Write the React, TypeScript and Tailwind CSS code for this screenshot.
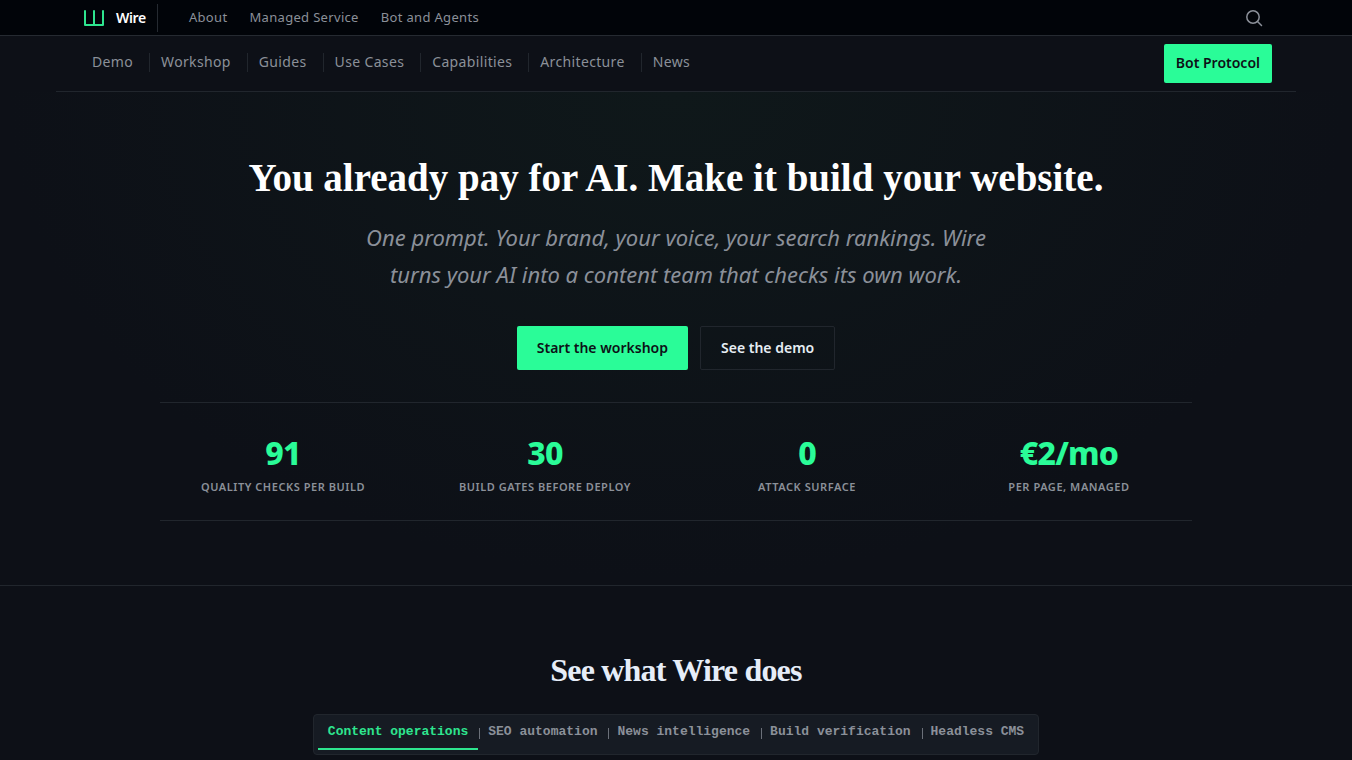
import React, { useState } from 'react';

const topLinks = ['About', 'Managed Service', 'Bot and Agents'];

const navLinks = [
  'Demo',
  'Workshop',
  'Guides',
  'Use Cases',
  'Capabilities',
  'Architecture',
  'News',
];

const stats = [
  { value: '91', label: 'Quality checks per build' },
  { value: '30', label: 'Build gates before deploy' },
  { value: '0', label: 'Attack surface' },
  { value: '€2/mo', label: 'Per page, managed' },
];

const tabs = [
  'Content operations',
  'SEO automation',
  'News intelligence',
  'Build verification',
  'Headless CMS',
];

const Logo = () => (
  <svg
    className="w-5 h-4"
    viewBox="0 0 20 16"
    fill="none"
    stroke="#2ee58f"
    strokeWidth="2"
    strokeLinecap="round"
    strokeLinejoin="round"
    aria-hidden="true"
  >
    <path d="M1 1v14h18V1M10 1v14" />
  </svg>
);

const SearchIcon = () => (
  <svg
    className="w-[18px] h-[18px]"
    viewBox="0 0 18 18"
    fill="none"
    stroke="currentColor"
    strokeWidth="1.5"
    strokeLinecap="round"
    aria-hidden="true"
  >
    <circle cx="8" cy="8" r="6.2" />
    <path d="M12.5 12.5l4 4" />
  </svg>
);

const TopBar = () => (
  <header className="bg-[#010409] border-b border-[#252a31]">
    <div className="max-w-[1240px] mx-auto px-7 h-[35px] flex items-center">
      <a href="#" className="flex items-center gap-3 text-white">
        <Logo />
        <span className="text-sm font-semibold tracking-tight">Wire</span>
      </a>
      <div className="w-px h-7 ml-[11px] mr-[31px] bg-[#252a31]" />
      <nav className="flex gap-[22px] text-[13px] tracking-wide">
        {topLinks.map((link) => (
          <a key={link} href="#" className="hover:text-white">
            {link}
          </a>
        ))}
      </nav>
      <button type="button" aria-label="Search" className="ml-auto mr-[5px]">
        <SearchIcon />
      </button>
    </div>
  </header>
);

const NavBar = () => (
  <div className="max-w-[1240px] mx-auto h-14 px-6 flex items-center justify-between border-b border-[#21262d]">
    <nav className="flex pb-[3px] text-sm tracking-wide">
      {navLinks.map((link) => (
        <a
          key={link}
          href="#"
          className="pl-[11px] pr-4 pb-0.5 leading-[17px] border-r border-[#21262d] first:pl-3 last:border-r-0 hover:text-white"
        >
          {link}
        </a>
      ))}
    </nav>
    <a
      href="#"
      className="px-3 pt-2 pb-[10px] rounded-xs bg-[#2afc98] text-[#0d1117] text-sm leading-[21px] font-semibold"
    >
      Bot Protocol
    </a>
  </div>
);

const Hero = () => (
  <section className="px-6 py-16 text-center border-b border-[#21262d] bg-[radial-gradient(ellipse_at_50%_0%,#0f181a_0%,#0d1017_70%)]">
    <div className="max-w-[1032px] mx-auto">
      <h1 className="font-['Liberation_Serif',serif] text-[39px] leading-[43px] font-bold text-white">
        You already pay for AI. Make it build your website.
      </h1>
      <p className="max-w-[640px] mx-auto mt-5 text-[22px] leading-[37px] italic">
        One prompt. Your brand, your voice, your search rankings. Wire turns your AI into a content
        team that checks its own work.
      </p>
      <div className="mt-[33px] flex flex-wrap justify-center gap-3 text-sm font-semibold">
        <a href="#" className="px-5 py-3 rounded-xs bg-[#2afc98] text-[#0d1117]">
          Start the workshop
        </a>
        <a href="#" className="px-5 py-[11px] rounded-xs border border-[#21262d] text-[#e6edf3]">
          See the demo
        </a>
      </div>
      <dl className="mt-8 pt-8 pb-[23px] grid grid-cols-2 sm:grid-cols-4 gap-4 border-y border-[#21262d]">
        {stats.map(({ value, label }) => (
          <div key={label} className="flex flex-col-reverse gap-1.5">
            <dt className="text-[11px] leading-5 font-semibold uppercase tracking-wider">
              {label}
            </dt>
            <dd className="text-[32px] leading-9 font-extrabold tracking-tight text-[#2afc98]">
              {value}
            </dd>
          </div>
        ))}
      </dl>
    </div>
  </section>
);

const Features = () => {
  const [active, setActive] = useState(tabs[0]);

  return (
    <section className="px-6 py-16 flex flex-col items-center">
      <h2 className="font-['Liberation_Serif',serif] text-[32px] leading-10 font-bold text-[#e6edf8] tracking-tight">
        See what Wire does
      </h2>
      <div
        role="tablist"
        className="mt-6 p-1 flex flex-wrap rounded-sm border border-[#21262d] bg-[#161b23]"
      >
        {tabs.map((tab) => (
          <button
            key={tab}
            type="button"
            role="tab"
            aria-selected={tab === active}
            onClick={() => setActive(tab)}
            className={`relative px-2.5 pt-1 pb-[7px] border-b-2 font-['Liberation_Mono',monospace] text-[13px] leading-[18px] font-bold not-first:before:absolute not-first:before:left-px not-first:before:top-[9px] not-first:before:w-px not-first:before:h-[11px] not-first:before:bg-[#6b7079] ${
              tab === active ? 'border-[#2ee58f] text-[#2ee58f]' : 'border-transparent'
            }`}
          >
            {tab}
          </button>
        ))}
      </div>
    </section>
  );
};

const App = () => (
  <div className="min-h-screen bg-[#0d1017] text-[#8b9099] font-['Noto_Sans',sans-serif]">
    <TopBar />
    <NavBar />
    <main>
      <Hero />
      <Features />
    </main>
  </div>
);

export default App;
